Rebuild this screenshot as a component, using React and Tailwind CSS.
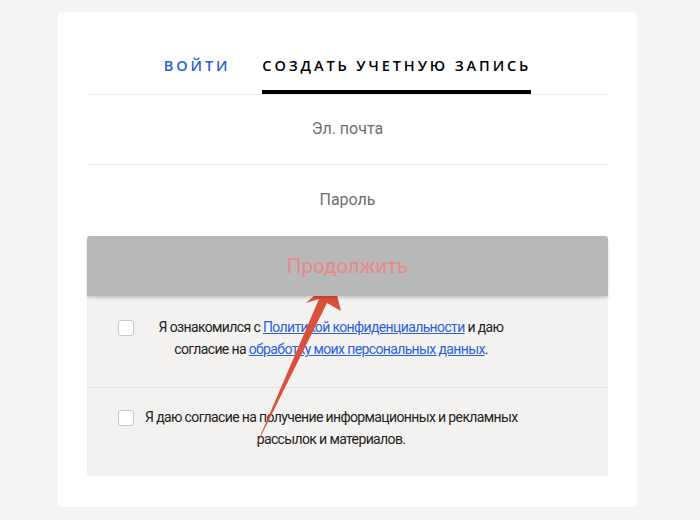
import React from "react";

// Форма регистрации: вкладки, поля, кнопка и согласия.
const Checkbox = () => (
    <span className="mt-[4px] block h-4 w-4 shrink-0 rounded-[3px] border border-[#c9c9c9] bg-white"></span>
);

const App = () => {
    return (
        <div className="relative min-h-[520px] bg-[#f4f4f4] pt-3 font-['Roboto',sans-serif]">
            <div className="ml-[58px] w-[579px] rounded-[4px] bg-white px-[29px] pb-[31px]">
                {/* Вкладки */}
                <div className="flex justify-center gap-8 border-b border-[#ececec] pt-[44px] font-['Open_Sans',sans-serif]">
                    <div className="pb-[18px] text-[14.5px] leading-5 font-semibold tracking-[0.2em] text-[#2a5fd6]">ВОЙТИ</div>
                    <div className="border-b-4 border-black pb-[14px] text-[14.5px] leading-5 font-semibold tracking-[0.2em] text-black">
                        СОЗДАТЬ УЧЕТНУЮ ЗАПИСЬ
                    </div>
                </div>

                {/* Поля */}
                <div className="flex h-[70px] items-center justify-center border-b border-[#ececec] pb-[2px] text-[16px] text-[#6e6e6e]">
                    Эл. почта
                </div>
                <div className="flex h-[71px] items-center justify-center pb-[2px] text-[16px] text-[#6e6e6e]">Пароль</div>

                <button className="relative z-10 flex h-[60px] w-full items-center justify-center rounded-t-[3px] bg-[#b9b9b9] text-[20.5px] text-[#e98888] shadow-[0_2px_3px_rgba(0,0,0,0.18)]">
                    Продолжить
                </button>

                {/* Согласия */}
                <div className="bg-[#f3f2f0] text-[14px] leading-[22px] tracking-[-0.045em] text-[#222]">
                    <div className="flex border-b border-[#e4e3e1] pt-[20px] pb-[27px] pl-[31px]">
                        <Checkbox />
                        <p className="ml-[11px] w-[372px] text-center whitespace-nowrap">
                            Я ознакомился с <a href="#" className="text-[#2a62d9] underline">Политикой конфиденциальности</a> и даю
                            <br />
                            согласие на <a href="#" className="text-[#2a62d9] underline">обработку моих персональных данных</a>.
                        </p>
                    </div>
                    <div className="flex pt-[18px] pb-[26px] pl-[31px]">
                        <Checkbox />
                        <p className="ml-[11px] w-[372px] text-center whitespace-nowrap">
                            Я даю согласие на получение информационных и рекламных
                            <br />
                            рассылок и материалов.
                        </p>
                    </div>
                </div>
            </div>

            {/* Стрелка-аннотация поверх формы */}
            <svg className="pointer-events-none absolute top-0 left-0" width="700" height="520" viewBox="0 0 700 520">
                <polygon
                    points="333,279 341,311 327,303 255,448 319,299 306,303"
                    fill="#d9503f"
                />
            </svg>
        </div>
    );
};

export default App;
